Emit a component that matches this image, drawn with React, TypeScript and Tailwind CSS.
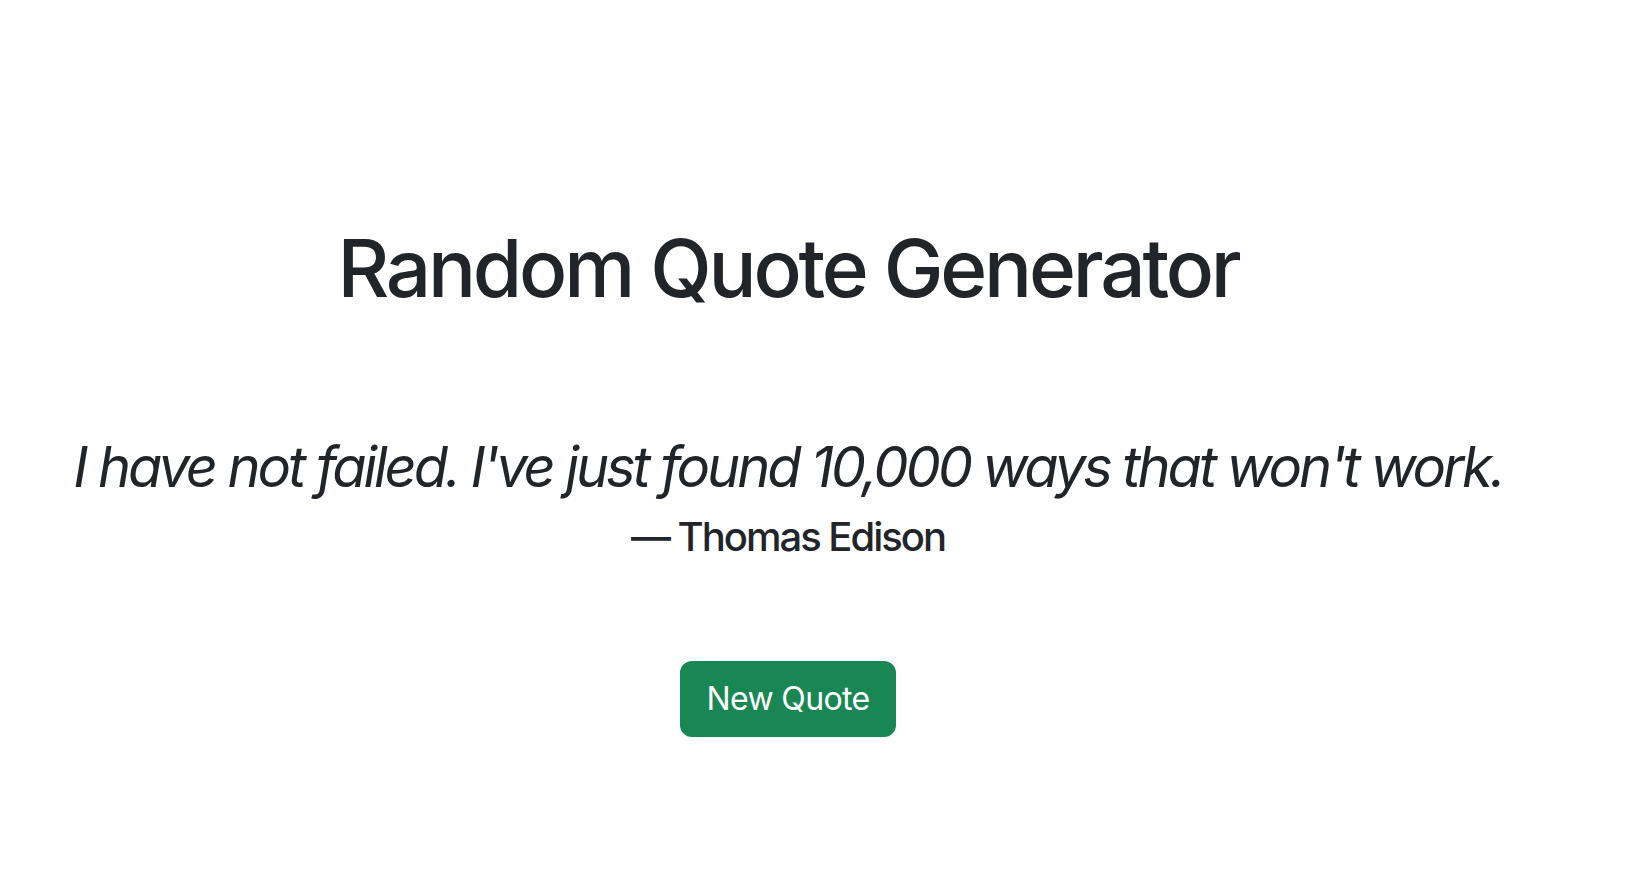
export default function App() {
  return (
    <div
      className="min-h-screen bg-white text-[#212529] pr-[60px]"
      style={{ fontFamily: 'Inter, "Noto Sans", sans-serif' }}
    >
      <div className="flex flex-col items-center text-center pt-[220px]">
        <h1 className="text-[80px] leading-[96px] font-medium tracking-[-0.04em]">Random Quote Generator</h1>

        <p className="mt-[118px] text-[56px] leading-[67px] italic whitespace-nowrap tracking-[-0.055em]">
          I have not failed. I've just found 10,000 ways that won't work.
        </p>
        <p className="mt-[6px] text-[40px] leading-[60px] font-medium tracking-[-0.05em]">— Thomas Edison</p>

        <button className="mt-[94px] h-[76px] px-[24px] rounded-[12px] border-2 border-[#198754] bg-[#198754] text-white text-[32px] leading-[48px] tracking-[-0.02em]">
          New Quote
        </button>
      </div>
    </div>
  );
}
